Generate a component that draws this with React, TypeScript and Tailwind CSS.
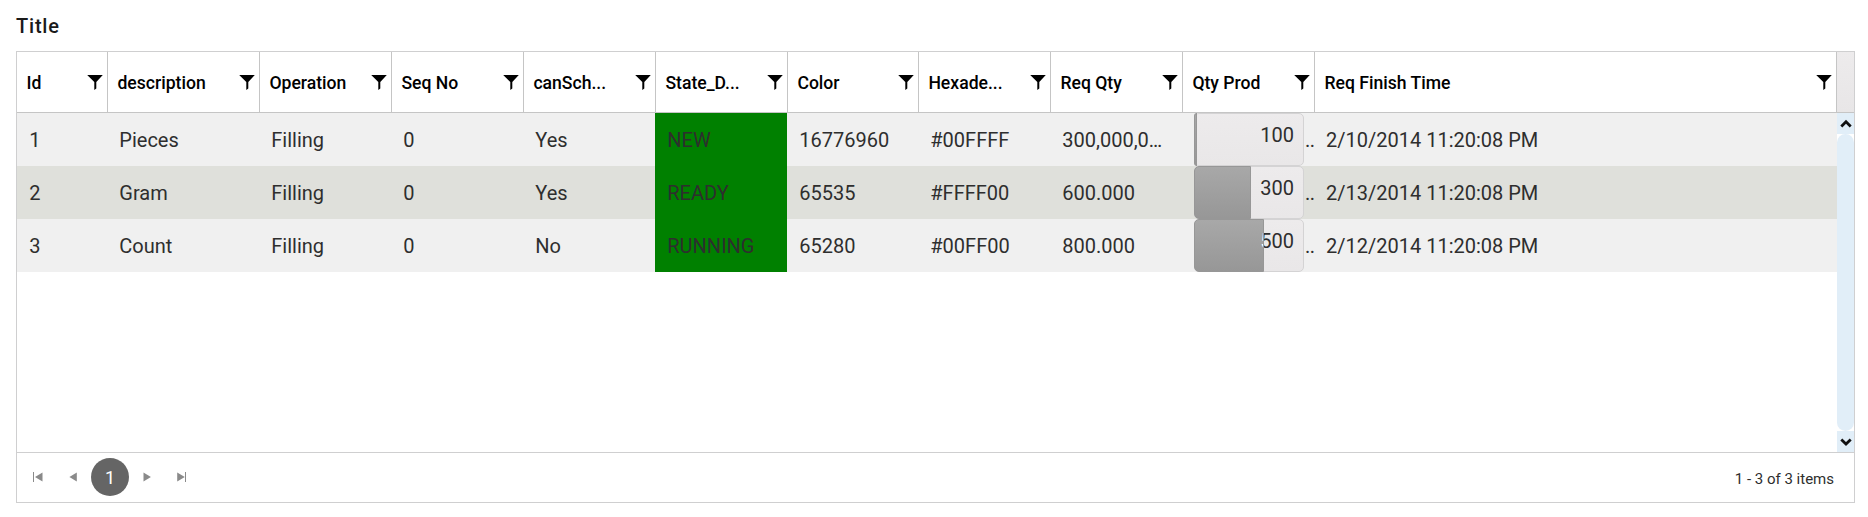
type Row = {
  cells: string[];
  qty: string;
  fill: number;
  finish: string;
};

const headers = [
  "Id",
  "description",
  "Operation",
  "Seq No",
  "canSch...",
  "State_D...",
  "Color",
  "Hexade...",
  "Req Qty",
  "Qty Prod",
  "Req Finish Time",
];

const rows: Row[] = [
  {
    cells: ["1", "Pieces", "Filling", "0", "Yes", "NEW", "16776960", "#00FFFF", "300,000,0…"],
    qty: "100",
    fill: 3,
    finish: "2/10/2014 11:20:08 PM",
  },
  {
    cells: ["2", "Gram", "Filling", "0", "Yes", "READY", "65535", "#FFFF00", "600.000"],
    qty: "300",
    fill: 57,
    finish: "2/13/2014 11:20:08 PM",
  },
  {
    cells: ["3", "Count", "Filling", "0", "No", "RUNNING", "65280", "#00FF00", "800.000"],
    qty: "500",
    fill: 70,
    finish: "2/12/2014 11:20:08 PM",
  },
];

const columns =
  "grid grid-cols-[90px_152px_132px_132px_132px_132px_131px_132px_132px_132px_522px]";

function FilterIcon() {
  return (
    <svg className="block h-4 w-4 shrink-0" viewBox="0 0 16 16" fill="#000">
      <path d="M0.2 1H15.8L9.3 8V14.4L7.3 16V8Z" />
    </svg>
  );
}

function ProgressBar({ value, fill }: { value: string; fill: number }) {
  const overlapsValue = fill > 60;
  return (
    <div className="relative h-[53px] w-[110px] shrink-0 rounded-[5px] border border-[#d4d3d4] bg-linear-to-b from-[#edebec] to-[#e9e7e8]">
      <div className="pr-[9px] pt-[9px] text-right leading-[24px]">{value}</div>
      <div
        className="absolute -left-px -top-px h-[53px] overflow-hidden rounded-l-[5px] border border-[#979797] bg-linear-to-b from-[#a8a8a8] to-[#979797]"
        style={{ width: fill }}
      >
        {overlapsValue && (
          <div className="w-[108px] pr-[9px] pt-[9px] text-right leading-[24px] text-white">{value}</div>
        )}
      </div>
    </div>
  );
}

export default function App() {
  return (
    <div className="h-[517px] w-[1868px] overflow-hidden bg-white pl-4 font-['Roboto',sans-serif]">
      <h1 className="h-[51px] pt-[14px] text-[20px] font-medium leading-6 tracking-[0.8px] text-[#1a1a1a]">Title</h1>
      <div className="flex h-[452px] w-[1839px] flex-col border border-[#cfcfd0]">
        <div className="flex h-[61px] shrink-0 border-b border-[#c5c5c5]">
          <div className={`${columns} h-[60px]`}>
            {headers.map((h, i) => (
              <div
                key={h}
                className={`flex items-center justify-between pr-1 ${i === 0 ? "pl-[9.6px]" : "border-l border-[#c5c5c5] pl-[9.4px]"}`}
              >
                <span className="whitespace-nowrap pt-[3px] text-[17.6px] font-medium text-black">{h}</span>
                <FilterIcon />
              </div>
            ))}
          </div>
          <div className="w-[18px] border-l border-[#c5c5c5] bg-linear-to-b from-[#edebec] to-[#e8e6e7]" />
        </div>
        <div className="flex min-h-0 flex-1">
          <div className="w-[1820px] text-[20px] text-[#2e2e2e]">
            {rows.map((r, n) => (
              <div key={r.qty} className={`${columns} h-[53px] ${n === 1 ? "bg-[#dfe0db]" : "bg-[#f0f0f0]"}`}>
                {r.cells.map((c, i) => (
                  <div
                    key={i}
                    className={`flex items-center whitespace-nowrap pl-[12.3px] pt-[1px] ${i === 5 ? "bg-[#008000]" : ""}`}
                  >
                    {c}
                  </div>
                ))}
                <div className="flex items-center overflow-hidden pl-3">
                  <ProgressBar value={r.qty} fill={r.fill} />
                  <span className="pt-[1px] pl-px tracking-[-0.5px]">..</span>
                </div>
                <div className="flex items-center whitespace-nowrap pl-[12px] pt-[1px]">{r.finish}</div>
              </div>
            ))}
          </div>
          <div className="flex w-[17px] shrink-0 flex-col bg-white">
            <div className="flex h-[21px] items-center justify-center bg-[#e1eef8]">
              <svg width="12" height="9" viewBox="0 0 12 9" fill="none" stroke="#111" strokeWidth="2.8">
                <path d="M1.3 7.4L6 2.8L10.7 7.4" />
              </svg>
            </div>
            <div className="flex-1 rounded-[9px] bg-[#e1eef8]" />
            <div className="flex h-[21px] items-center justify-center bg-[#e1eef8]">
              <svg width="12" height="9" viewBox="0 0 12 9" fill="none" stroke="#111" strokeWidth="2.8">
                <path d="M1.3 2.4L6 7L10.7 2.4" />
              </svg>
            </div>
          </div>
        </div>
        <div className="flex h-[50px] shrink-0 items-center border-t border-[#cfcfd0] pb-px pr-5">
          <svg className="ml-4" width="10" height="10" viewBox="0 0 10 10" fill="#8a8a8a">
            <path d="M0 0H1V10H0ZM9.5 0.5V9.5L2 5Z" />
          </svg>
          <svg className="ml-[26px]" width="8" height="10" viewBox="0 0 8 10" fill="#8a8a8a">
            <path d="M7.8 0.4V9.6L0.4 5Z" />
          </svg>
          <div className="ml-[14px] flex h-[38px] w-[38px] items-center justify-center rounded-full bg-[#656565] pt-px text-[18px] text-white">
            1
          </div>
          <svg className="ml-[14px]" width="8" height="10" viewBox="0 0 8 10" fill="#8a8a8a">
            <path d="M0.5 0.4V9.6L7.9 5Z" />
          </svg>
          <svg className="ml-[26px]" width="10" height="10" viewBox="0 0 10 10" fill="#8a8a8a">
            <path d="M8 0H9V10H8ZM0.2 0.5V9.5L7.8 5Z" />
          </svg>
          <span className="ml-auto pt-[4px] text-[15px] text-[#2e2e2e]">1 - 3 of 3 items</span>
        </div>
      </div>
    </div>
  );
}
